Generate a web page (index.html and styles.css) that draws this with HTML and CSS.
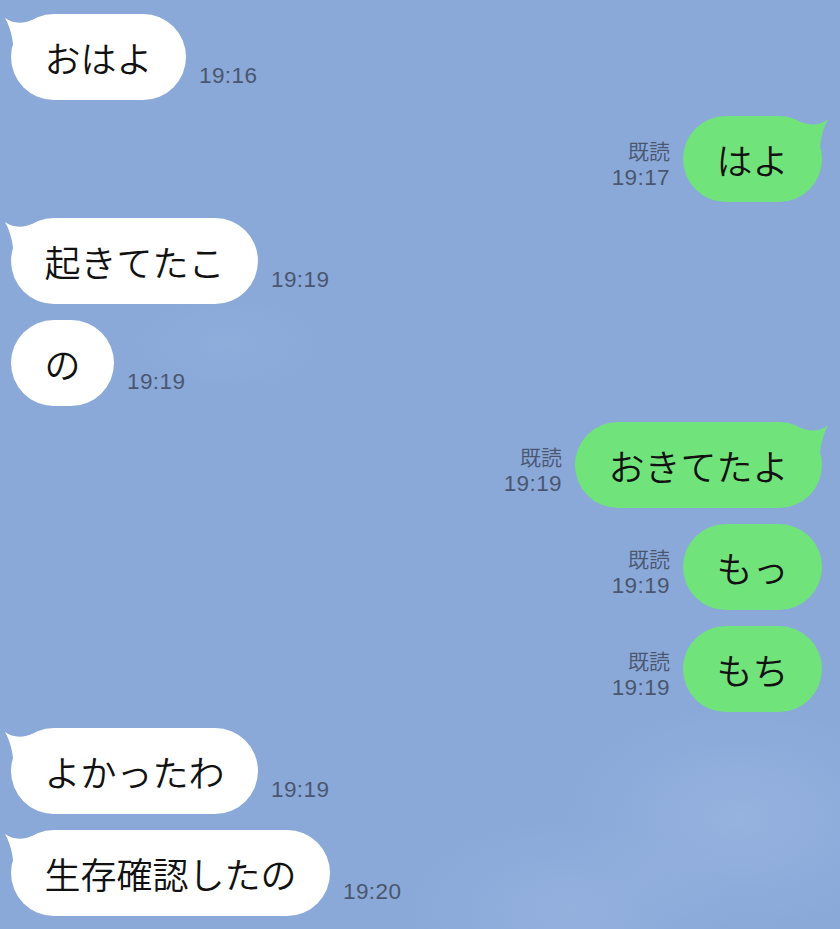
FILE: index.html
```html
<!DOCTYPE html>
<html lang="ja">
<head>
<meta charset="utf-8">
<title>Chat</title>
<link rel="stylesheet" href="styles.css">
</head>
<body>
<div class="chat">
  <div class="row in">
    <div class="bubble">おはよ<svg class="tail" viewBox="-8 0 34 32"><path d="M-6 4 C2 10 12 10 24 5 L24 30 L2 30 C1 20 -2 11 -6 4Z"/></svg></div>
    <div class="meta"><span class="time">19:16</span></div>
  </div>
  <div class="row out">
    <div class="meta"><span class="read">既読</span><span class="time">19:17</span></div>
    <div class="bubble">はよ<svg class="tail" viewBox="-8 0 34 32"><path d="M-6 3 C2 10 12 10 24 5 L24 30 L2 30 C1 20 -2 11 -6 3Z"/></svg></div>
  </div>
  <div class="row in">
    <div class="bubble">起きてたこ<svg class="tail" viewBox="-8 0 34 32"><path d="M-6 4 C2 10 12 10 24 5 L24 30 L2 30 C1 20 -2 11 -6 4Z"/></svg></div>
    <div class="meta"><span class="time">19:19</span></div>
  </div>
  <div class="row in">
    <div class="bubble">の</div>
    <div class="meta"><span class="time">19:19</span></div>
  </div>
  <div class="row out">
    <div class="meta"><span class="read">既読</span><span class="time">19:19</span></div>
    <div class="bubble">おきてたよ<svg class="tail" viewBox="-8 0 34 32"><path d="M-6 3 C2 10 12 10 24 5 L24 30 L2 30 C1 20 -2 11 -6 3Z"/></svg></div>
  </div>
  <div class="row out">
    <div class="meta"><span class="read">既読</span><span class="time">19:19</span></div>
    <div class="bubble">もっ</div>
  </div>
  <div class="row out">
    <div class="meta"><span class="read">既読</span><span class="time">19:19</span></div>
    <div class="bubble">もち</div>
  </div>
  <div class="row in">
    <div class="bubble">よかったわ<svg class="tail" viewBox="-8 0 34 32"><path d="M-6 4 C2 10 12 10 24 5 L24 30 L2 30 C1 20 -2 11 -6 4Z"/></svg></div>
    <div class="meta"><span class="time">19:19</span></div>
  </div>
  <div class="row in">
    <div class="bubble">生存確認したの<svg class="tail" viewBox="-8 0 34 32"><path d="M-6 4 C2 10 12 10 24 5 L24 30 L2 30 C1 20 -2 11 -6 4Z"/></svg></div>
    <div class="meta"><span class="time">19:20</span></div>
  </div>
</div>
</body>
</html>
```
FILE: styles.css
```css
html, body {
  margin: 0;
  padding: 0;
}
body {
  width: 840px;
  height: 929px;
  overflow: hidden;
  background-color: #8aa9d9;
  background-image:
    radial-gradient(ellipse 170px 110px at 88% 88%, rgba(158, 184, 226, 0.6), rgba(158, 184, 226, 0) 100%),
    radial-gradient(ellipse 160px 90px at 68% 98%, rgba(158, 184, 226, 0.5), rgba(158, 184, 226, 0) 100%),
    radial-gradient(ellipse 90px 45px at 27% 37%, rgba(150, 178, 222, 0.45), rgba(150, 178, 222, 0) 100%);
  font-family: "Noto Sans CJK JP", sans-serif;
}
.chat {
  display: flex;
  flex-direction: column;
  gap: 16px;
  padding: 14px 18px 0 11px;
}
.row {
  display: flex;
  align-items: flex-end;
  gap: 13px;
}
.row.out {
  justify-content: flex-end;
}
.bubble {
  position: relative;
  height: 86px;
  padding: 0 33.5px;
  border-radius: 43px;
  display: flex;
  align-items: center;
  font-size: 36px;
  font-weight: 350;
  color: #111;
  white-space: nowrap;
  background: #ffffff;
  fill: #ffffff;
}
.out .bubble {
  background: #71e37b;
  fill: #71e37b;
}
.tail {
  position: absolute;
  top: 0;
  left: -8px;
  width: 34px;
  height: 32px;
}
.out .tail {
  left: auto;
  right: -8px;
  transform: scaleX(-1);
}
.meta {
  display: flex;
  flex-direction: column;
  align-items: flex-end;
  margin-bottom: 10px;
  color: #4a5670;
  font-family: "Liberation Sans", "Noto Sans CJK JP", sans-serif;
}
.time {
  font-size: 22.5px;
  line-height: 28px;
  letter-spacing: 0.4px;
}
.read {
  font-size: 21px;
  line-height: 28px;
  font-weight: 350;
  font-family: "Noto Sans CJK JP", sans-serif;
}
```
